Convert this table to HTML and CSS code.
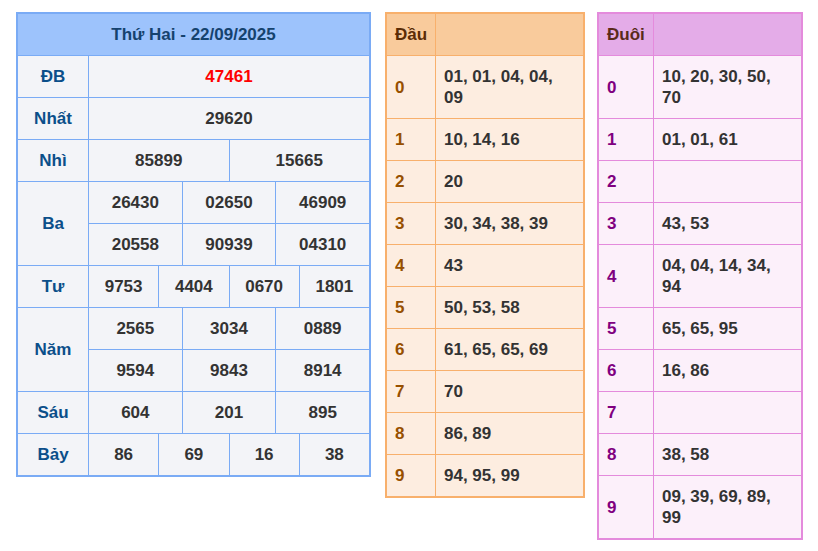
FILE: index.html
```html
<!DOCTYPE html>
<html lang="vi">
<head>
<meta charset="utf-8">
<title>Kết quả xổ số</title>
<link rel="stylesheet" href="styles.css">
</head>
<body>
<div class="wrap">
  <div class="kq">
    <div class="kq-head">Thứ Hai - 22/09/2025</div>

    <div class="lbl">ĐB</div>
    <div class="val s12 red">47461</div>

    <div class="lbl">Nhất</div>
    <div class="val s12">29620</div>

    <div class="lbl">Nhì</div>
    <div class="val s6">85899</div>
    <div class="val s6">15665</div>

    <div class="lbl r2">Ba</div>
    <div class="val s4">26430</div>
    <div class="val s4">02650</div>
    <div class="val s4">46909</div>
    <div class="val s4">20558</div>
    <div class="val s4">90939</div>
    <div class="val s4">04310</div>

    <div class="lbl">Tư</div>
    <div class="val s3">9753</div>
    <div class="val s3">4404</div>
    <div class="val s3">0670</div>
    <div class="val s3">1801</div>

    <div class="lbl r2">Năm</div>
    <div class="val s4">2565</div>
    <div class="val s4">3034</div>
    <div class="val s4">0889</div>
    <div class="val s4">9594</div>
    <div class="val s4">9843</div>
    <div class="val s4">8914</div>

    <div class="lbl">Sáu</div>
    <div class="val s4">604</div>
    <div class="val s4">201</div>
    <div class="val s4">895</div>

    <div class="lbl">Bảy</div>
    <div class="val s3">86</div>
    <div class="val s3">69</div>
    <div class="val s3">16</div>
    <div class="val s3">38</div>
  </div>

  <div class="lt dau">
    <div class="lt-head">Đầu</div><div class="lt-head"></div>
    <div class="k">0</div><div class="v">01, 01, 04, 04, 09</div>
    <div class="k">1</div><div class="v">10, 14, 16</div>
    <div class="k">2</div><div class="v">20</div>
    <div class="k">3</div><div class="v">30, 34, 38, 39</div>
    <div class="k">4</div><div class="v">43</div>
    <div class="k">5</div><div class="v">50, 53, 58</div>
    <div class="k">6</div><div class="v">61, 65, 65, 69</div>
    <div class="k">7</div><div class="v">70</div>
    <div class="k">8</div><div class="v">86, 89</div>
    <div class="k">9</div><div class="v">94, 95, 99</div>
  </div>

  <div class="lt duoi">
    <div class="lt-head">Đuôi</div><div class="lt-head"></div>
    <div class="k">0</div><div class="v">10, 20, 30, 50, 70</div>
    <div class="k">1</div><div class="v">01, 01, 61</div>
    <div class="k">2</div><div class="v"></div>
    <div class="k">3</div><div class="v">43, 53</div>
    <div class="k">4</div><div class="v">04, 04, 14, 34, 94</div>
    <div class="k">5</div><div class="v">65, 65, 95</div>
    <div class="k">6</div><div class="v">16, 86</div>
    <div class="k">7</div><div class="v"></div>
    <div class="k">8</div><div class="v">38, 58</div>
    <div class="k">9</div><div class="v">09, 39, 69, 89, 99</div>
  </div>
</div>
</body>
</html>
```

FILE: styles.css
```css
html, body {
  margin: 0;
  padding: 0;
  background: #ffffff;
}

body {
  font-family: "Liberation Sans", Arial, sans-serif;
  font-size: 17px;
  font-weight: bold;
  color: #333333;
}

.wrap {
  display: flex;
  align-items: flex-start;
  gap: 12px;
  padding: 12px 0 0 16px;
}

/* Main results table */
.kq {
  width: 355px;
  box-sizing: border-box;
  border: 2px solid #7aabf5;
  background: #7aabf5;
  display: grid;
  grid-template-columns: 70px repeat(12, 1fr);
  grid-auto-rows: 41px;
  gap: 1px;
  margin-right: 2px;
}

.kq > div {
  display: flex;
  align-items: center;
  justify-content: center;
  background: #f3f4f8;
}

.kq .kq-head {
  grid-column: 1 / -1;
  background: #9dc3fc;
  color: #15426e;
}

.lbl {
  color: #0b4f8a;
}

.r2 {
  grid-row: span 2;
}

.s12 { grid-column: span 12; }
.s6 { grid-column: span 6; }
.s4 { grid-column: span 4; }
.s3 { grid-column: span 3; }

.red {
  color: #ff0000;
}

/* Loto tables */
.lt {
  box-sizing: border-box;
  border: 2px solid;
  display: grid;
  gap: 1px;
  grid-auto-rows: minmax(41px, auto);
}

.lt > div {
  display: flex;
  align-items: center;
  padding: 10px 20px 10px 8px;
  line-height: 21px;
  box-sizing: border-box;
  min-height: 41px;
}

.lt .k {
  padding-right: 4px;
}

.dau {
  width: 200px;
  grid-template-columns: 48px 1fr;
  border-color: #f8b06c;
  background: #f8b06c;
}

.dau > div {
  background: #fdede0;
}

.dau .lt-head {
  background: #f9cb9c;
  color: #5b2c06;
}

.dau .k {
  color: #975000;
}

.duoi {
  width: 206px;
  grid-template-columns: 54px 1fr;
  border-color: #e48bdc;
  background: #e48bdc;
}

.duoi > div {
  background: #fcf0fa;
}

.duoi .lt-head {
  background: #e4ace8;
  color: #5a2a1a;
}

.duoi .k {
  color: #800080;
}
```
